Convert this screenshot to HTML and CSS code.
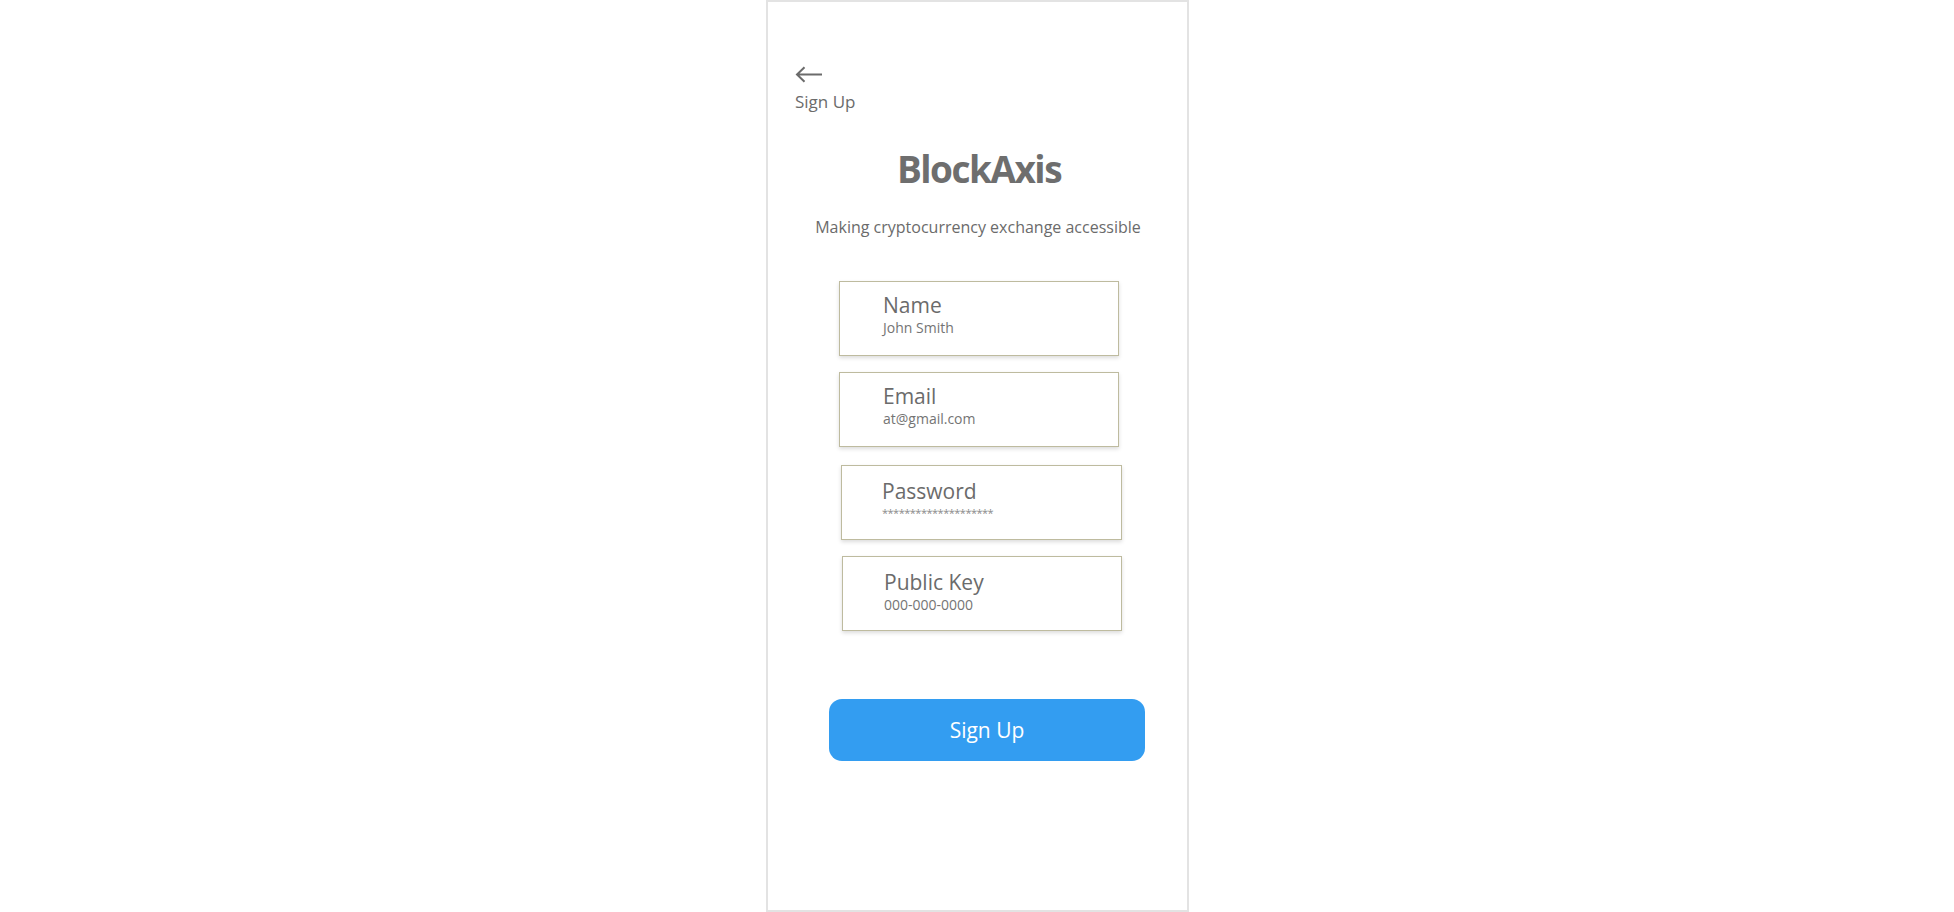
FILE: index.html
```html
<!DOCTYPE html>
<html>
<head>
<meta charset="utf-8">
<link rel="stylesheet" href="styles.css">
</head>
<body>
<div class="phone">
  <div class="back">
    <svg width="27" height="17" viewBox="0 0 27 17"><path d="M27 8.5H2M9.5 1.2L2 8.5L9.5 15.8" fill="none" stroke="#6b6b6b" stroke-width="2"/></svg>
  </div>
  <div class="page-label">Sign Up</div>
  <h1 class="title">BlockAxis</h1>
  <p class="subtitle">Making cryptocurrency exchange accessible</p>
  <div class="fields">
    <div class="field f-name"><div class="f-label">Name</div><div class="f-value">John Smith</div></div>
    <div class="field f-email"><div class="f-label">Email</div><div class="f-value">at@gmail.com</div></div>
    <div class="field f-pass"><div class="f-label">Password</div><div class="f-value stars">********************</div></div>
    <div class="field f-key"><div class="f-label">Public Key</div><div class="f-value">000-000-0000</div></div>
  </div>
  <button class="signup">Sign Up</button>
</div>
</body>
</html>
```

FILE: styles.css
```css
html, body {
  margin: 0;
  padding: 0;
  background: #ffffff;
}
body {
  display: flex;
  justify-content: center;
  font-family: "Open Sans", "Noto Sans", sans-serif;
  color: #6b6b6b;
}
.phone {
  box-sizing: border-box;
  width: 423px;
  height: 912px;
  margin-left: 1px;
  border: 2px solid #e3e3e3;
  padding: 64px 0 0 27px;
  display: flex;
  flex-direction: column;
  align-items: flex-start;
}
.back {
  height: 17px;
  display: flex;
}
.page-label {
  margin-top: 9px;
  font-size: 17px;
  line-height: 20px;
}
.title {
  align-self: center;
  margin: 35px 0 0 -24px;
  font-size: 37px;
  letter-spacing: -1.5px;
  line-height: 44px;
  font-weight: 700;
  color: #6e6e6e;
}
.subtitle {
  align-self: center;
  margin: 26px 0 0 -26px;
  font-size: 16px;
  line-height: 20px;
}
.fields {
  margin-top: 44px;
  margin-left: 44px;
  display: flex;
  flex-direction: column;
}
.field {
  box-sizing: border-box;
  width: 280px;
  height: 75px;
  border: 1px solid #bebb9f;
  box-shadow: 0 2px 4px rgba(0, 0, 0, 0.14);
  padding: 10px 0 0 43px;
  background: #fff;
}
.f-email { margin-top: 16px; }
.f-pass { margin-top: 18px; margin-left: 2px; width: 281px; padding-top: 12px; padding-left: 40px; }
.f-key { margin-top: 16px; margin-left: 3px; padding-top: 12px; padding-left: 41px; }
.f-label {
  font-size: 21px;
  line-height: 26px;
  color: #6b6b6b;
}
.f-value {
  margin-top: 1px;
  font-size: 14px;
  line-height: 18px;
  color: #747474;
}
.stars {
  font-size: 11px;
  letter-spacing: -0.5px;
  line-height: 14px;
  margin-top: 2px;
  color: #8a8a8a;
}
.signup {
  margin: 68px 0 0 34px;
  width: 316px;
  height: 62px;
  border: none;
  border-radius: 13px;
  background: #339df1;
  color: #ffffff;
  font-family: "Open Sans", "Noto Sans", sans-serif;
  font-size: 21px;
  line-height: 62px;
  padding: 0;
}
```
